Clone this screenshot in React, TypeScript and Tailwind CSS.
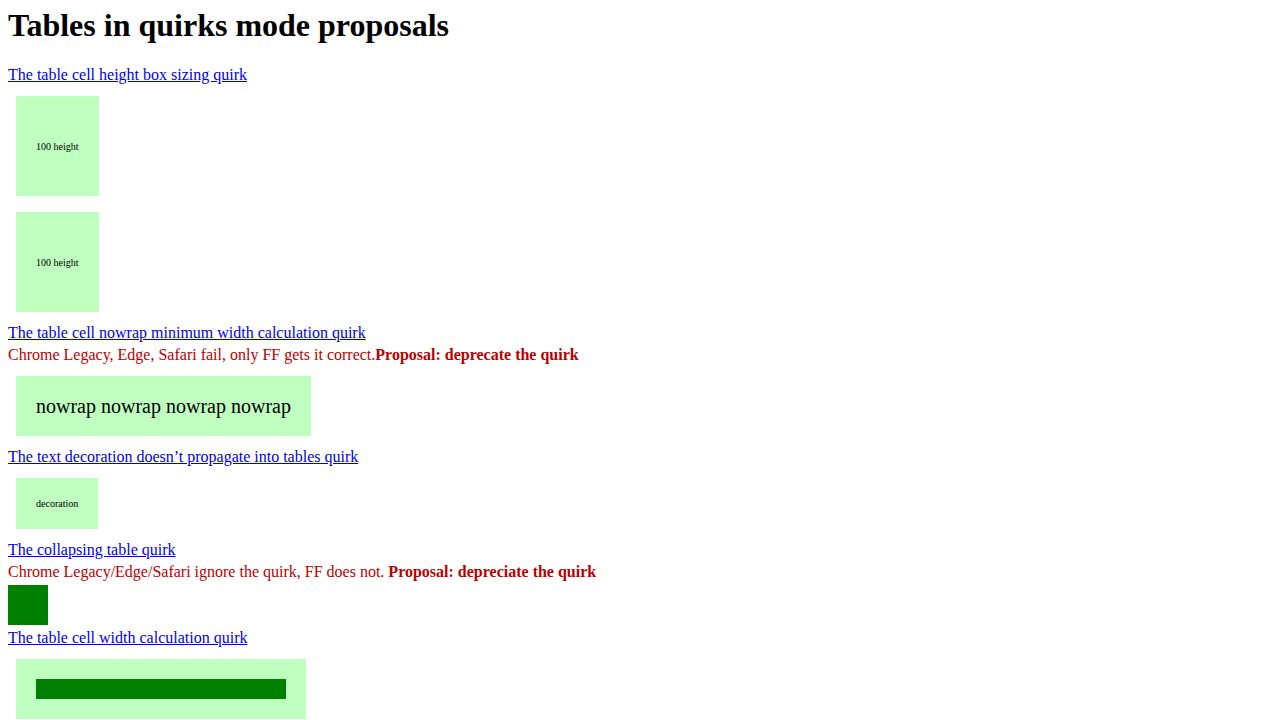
const serif = "font-['Liberation_Serif','Times_New_Roman',serif]";

function QuirkLink({ children, className = "" }: { children: React.ReactNode; className?: string }) {
  return (
    <a href="#" className={`block w-fit text-[16px] leading-[18px] text-[#0000ee] underline ${className}`}>
      {children}
    </a>
  );
}

function Note({ text, proposal, className = "" }: { text: string; proposal: string; className?: string }) {
  return (
    <p className={`text-[16px] leading-[18px] text-[#bb0000] ${className}`}>
      {text}
      <b className="font-bold">{proposal}</b>
    </p>
  );
}

// light green cell used by every test table
function Cell({ children, className = "" }: { children?: React.ReactNode; className?: string }) {
  return <div className={`flex w-fit items-center bg-[#bfffbf] px-[20px] ${className}`}>{children}</div>;
}

export default function App() {
  return (
    <div className={`${serif} bg-white px-2 pt-[7px] text-black min-h-[720px]`}>
      <h1 className="text-[32px] font-bold leading-[37px] mb-[22px]">Tables in quirks mode proposals</h1>

      {/* height box sizing */}
      <QuirkLink>The table cell height box sizing quirk</QuirkLink>
      <div className="ml-[8px] mt-[12px] flex flex-col gap-[16px]">
        <Cell className="h-[100px] text-[10px] leading-[11px]">100 height</Cell>
        <Cell className="h-[100px] text-[10px] leading-[11px]">100 height</Cell>
      </div>

      {/* nowrap */}
      <QuirkLink className="mt-[12px]">The table cell nowrap minimum width calculation quirk</QuirkLink>
      <Note
        className="mt-[4px]"
        text="Chrome Legacy, Edge, Safari fail, only FF gets it correct."
        proposal="Proposal: deprecate the quirk"
      />
      <Cell className="ml-[8px] mt-[12px] h-[60px] whitespace-nowrap text-[20px] leading-[20px]">
        nowrap nowrap nowrap nowrap
      </Cell>

      {/* text decoration */}
      <QuirkLink className="mt-[12px]">The text decoration doesn’t propagate into tables quirk</QuirkLink>
      <Cell className="ml-[8px] mt-[12px] h-[51px] text-[10px] leading-[11px]">decoration</Cell>

      {/* collapsing table */}
      <QuirkLink className="mt-[12px]">The collapsing table quirk</QuirkLink>
      <Note
        className="mt-[4px]"
        text="Chrome Legacy/Edge/Safari ignore the quirk, FF does not. "
        proposal="Proposal: depreciate the quirk"
      />
      <div className="mt-[4px] h-[40px] w-[40px] bg-[#008000]" />

      {/* cell width */}
      <QuirkLink className="mt-[4px]">The table cell width calculation quirk</QuirkLink>
      <Cell className="ml-[8px] mt-[12px] h-[60px]">
        <div className="h-[20px] w-[250px] bg-[#008000]" />
      </Cell>
    </div>
  );
}
